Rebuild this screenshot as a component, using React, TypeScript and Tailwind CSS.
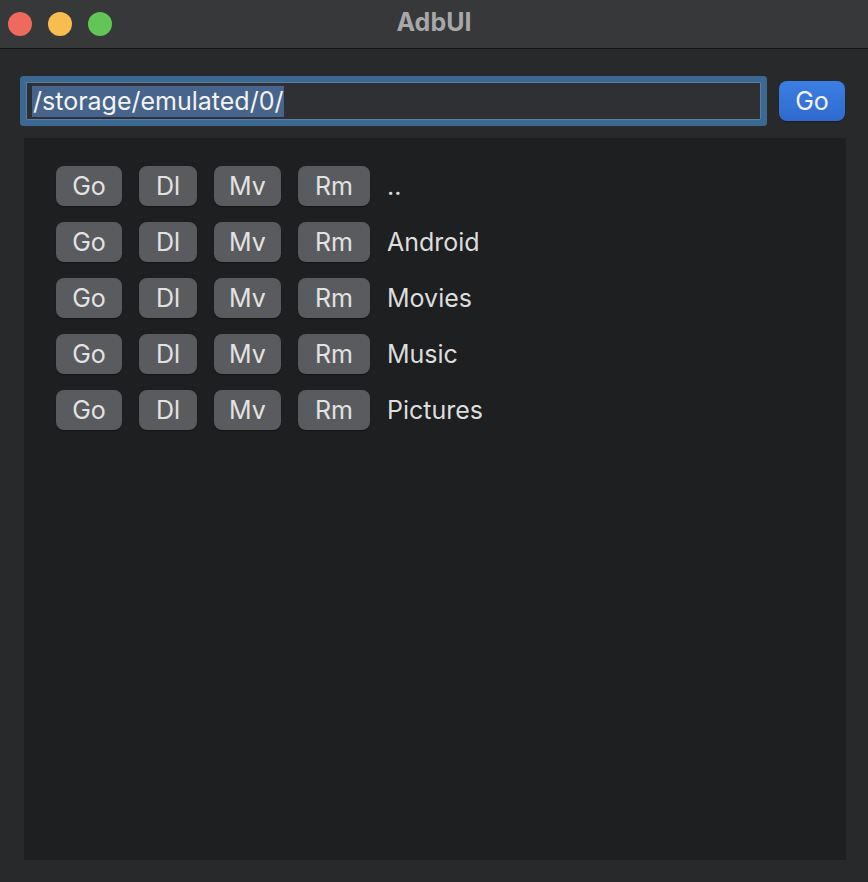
import React from 'react';

const entries = ['..', 'Android', 'Movies', 'Music', 'Pictures'];
const actions = [
  { label: 'Go', w: 'w-[66px]' },
  { label: 'Dl', w: 'w-[58px]' },
  { label: 'Mv', w: 'w-[67px]' },
  { label: 'Rm', w: 'w-[72px]' },
];

function App() {
  return (
    <div
      className="w-[868px] h-[882px] bg-[#28292b] flex flex-col overflow-hidden"
      style={{ fontFamily: 'Inter, "Liberation Sans", sans-serif' }}
    >
      {/* Title bar */}
      <div className="relative h-[49px] flex-shrink-0 bg-[#37383a] border-b border-[#141416] flex items-center">
        <div className="flex items-center gap-[16px] pl-[8px]">
          <span className="w-[24px] h-[24px] rounded-full bg-[#ee6a5f]" />
          <span className="w-[24px] h-[24px] rounded-full bg-[#f5be4f]" />
          <span className="w-[24px] h-[24px] rounded-full bg-[#62c555]" />
        </div>
        <div className="absolute inset-0 flex items-center justify-center text-[25px] font-bold text-[#a7a7a9] pb-[2px]">
          AdbUI
        </div>
      </div>

      {/* Path bar */}
      <div className="mt-[32px] h-[40px] flex items-center pl-[26px] pr-[23px] gap-[18px]">
        <div className="flex-1 h-[38px] rounded-[1px] bg-[#2f3034] border border-[#5a7ea3] shadow-[0_0_0_6px_#3c6994] flex items-center pl-[5px]">
          <span className="bg-[#46648c] text-[#f4f4f4] text-[25px] leading-[31px] px-[1px]">
            /storage/emulated/0/
          </span>
        </div>
        <button className="w-[66px] h-[40px] rounded-[8px] bg-gradient-to-b from-[#3c7fe4] to-[#2f6ace] text-[#f2f4f8] text-[25px] leading-none shadow-[0_1px_1px_rgba(0,0,0,0.35)]">
          Go
        </button>
      </div>

      {/* File list */}
      <div className="mt-[17px] ml-[24px] w-[822px] h-[722px] bg-[#1e1f21] pt-[28px] pl-[32px] flex flex-col gap-[16px]">
        {entries.map((name) => (
          <div key={name} className="flex items-center gap-[17px] h-[40px]">
            {actions.map((a) => (
              <button
                key={a.label}
                className={`${a.w} h-[40px] rounded-[8px] bg-[#5a5b5e] text-[#e2e2e2] text-[25px] leading-none shadow-[0_1px_1px_rgba(0,0,0,0.4)]`}
              >
                {a.label}
              </button>
            ))}
            <span className="text-[#dddddd] text-[25px] leading-none">{name}</span>
          </div>
        ))}
      </div>
    </div>
  );
}

export default App;
